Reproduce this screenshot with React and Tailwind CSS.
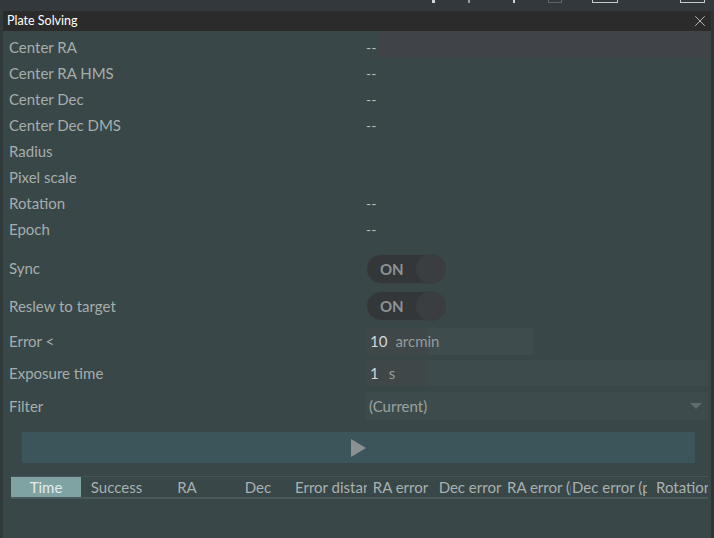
import { X } from "lucide-react";

const rows = [
  { label: "Center RA", value: "--", hot: true },
  { label: "Center RA HMS", value: "--" },
  { label: "Center Dec", value: "--" },
  { label: "Center Dec DMS", value: "--" },
  { label: "Radius", value: "" },
  { label: "Pixel scale", value: "" },
  { label: "Rotation", value: "--" },
  { label: "Epoch", value: "--" },
];

// widths measured off the grid header, clip = text wider than its column
const columns = [
  { name: "Time", w: "w-[70px]", active: true },
  { name: "Success", w: "w-[71px]" },
  { name: "RA", w: "w-[70px]" },
  { name: "Dec", w: "w-[72px]" },
  { name: "Error distance", w: "w-[73px]", clip: true },
  { name: "RA error", w: "w-[67px]" },
  { name: "Dec error", w: "w-[72px]" },
  { name: "RA error (pixels)", w: "w-[65px]", clip: true },
  { name: "Dec error (pixels)", w: "w-[76px]", clip: true },
  { name: "Rotation", w: "w-[61px]", clip: true, pad: true },
];

const Toggle = () => (
  <div className="relative w-[80px] h-[30px]">
    <div className="absolute inset-0 rounded-full bg-[#33373a] border border-[#3e4346]" />
    <div className="absolute right-0 top-0 w-[30px] h-[30px] rounded-full bg-[#3a3e41]" />
    <span className="absolute left-[14px] top-[5px] text-[15px] leading-[20px] font-bold text-[#8e9294]">ON</span>
  </div>
);

const Label = ({ children }) => (
  <div className="w-[357px] shrink-0 text-[15px] text-[#a6adad]">{children}</div>
);

export default function App() {
  return (
    <div
      className="w-[714px] h-[538px] flex flex-col bg-[#394748] overflow-hidden"
      style={{ fontFamily: "Lato, 'Noto Sans', sans-serif" }}
    >
      {/* app toolbar behind the window */}
      <div className="h-[11px] shrink-0 bg-[#32383b] relative">
        <div className="absolute left-[432px] top-0 w-[3px] h-[3px] bg-[#d0d4d5]" />
        <div className="absolute left-[468px] top-0 w-[2px] h-[3px] bg-[#9aa0a2]" />
        <div className="absolute left-[513px] top-0 w-[2px] h-[3px] bg-[#d0d4d5]" />
        <div className="absolute left-[548px] top-0 w-[14px] h-[3px] border-b border-x border-[#5f6567]" />
        <div className="absolute left-[592px] top-0 w-[26px] h-[3px] border-b border-x border-[#c6cacb]" />
        <div className="absolute left-[680px] top-0 w-[25px] h-[3px] border-b border-x border-[#c6cacb]" />
      </div>

      <div className="flex flex-1 min-h-0">
        <div className="w-[3px] shrink-0 bg-[#313a3b]" />

        <div className="flex-1 flex flex-col min-w-0">
          {/* title bar */}
          <div className="h-[20px] shrink-0 bg-[#2b2b2b] flex items-center justify-between pl-[4px] pr-[2px]">
            <span className="text-[12.5px] text-white">Plate Solving</span>
            <X size={18} strokeWidth={1} className="text-[#e2e2e2]" />
          </div>

          <div className="relative">
            <div className="absolute left-[375px] right-0 top-0 h-[27px] bg-[#404448]" />
            <div className="relative pt-[3px]">
              {rows.map((r) => (
                <div key={r.label} className="h-[26px] flex items-center pl-[6px]">
                  <Label>{r.label}</Label>
                  <span className="text-[14px] text-[#b6bbbc]">{r.value}</span>
                </div>
              ))}
            </div>
          </div>

          <div className="mt-[8px] h-[37px] flex items-center pl-[6px]">
            <Label>Sync</Label>
            <Toggle />
          </div>
          <div className="h-[38px] flex items-center pl-[6px]">
            <Label>Reslew to target</Label>
            <Toggle />
          </div>

          <div className="mt-[2px] h-[28px] flex items-center pl-[6px]">
            <Label>Error &lt;</Label>
            <div className="h-[27px] w-[168px] -ml-[1px] flex bg-[#3e4c4d]">
              <div className="w-[63px] h-full bg-[#3f4749] flex items-center pl-[5px] text-[15px]">
                <span className="text-[#d3d7d7]">10</span>
                <span className="ml-[8px] text-[#959c9d]">arcmin</span>
              </div>
            </div>
          </div>

          <div className="mt-[5px] h-[26px] flex items-center pl-[6px]">
            <Label>Exposure time</Label>
            <div className="h-[26px] w-[343px] -ml-[1px] flex bg-[#3d4b4c]">
              <div className="w-[63px] h-full bg-[#3f4749] flex items-center pl-[5px] text-[15px]">
                <span className="text-[#d3d7d7]">1</span>
                <span className="ml-[10px] text-[#959c9d]">s</span>
              </div>
            </div>
          </div>

          <div className="mt-[6px] h-[28px] flex items-center pl-[6px]">
            <Label>Filter</Label>
            <div className="h-[28px] w-[343px] -ml-[1px] bg-[#3e4b4c] flex items-center justify-between pl-[4px] pr-[6px]">
              <span className="text-[15px] text-[#9ba1a2]">(Current)</span>
              <svg width="12" height="6" viewBox="0 0 12 6">
                <path d="M0 0 L12 0 L6 6 Z" fill="#5e6a6e" />
              </svg>
            </div>
          </div>

          <div className="mt-[12px] ml-[19px] w-[673px] h-[31px] shrink-0 bg-[#3c555b] flex items-center justify-center">
            <svg width="15" height="18" viewBox="0 0 15 18">
              <path d="M0 0 L15 9 L0 18 Z" fill="#8b9091" />
            </svg>
          </div>

          {/* results grid header */}
          <div className="mt-[13px] ml-[8px] mr-[3px] border-t border-[#455455] border-b-2 border-b-[#4a5a5c] flex h-[23px]">
            {columns.map((c) => (
              <div
                key={c.name}
                className={`${c.w} shrink-0 h-[20px] overflow-hidden whitespace-nowrap flex items-center text-[15px] ${
                  c.clip ? "justify-start" : "justify-center"
                } ${c.pad ? "pl-[9px]" : c.clip ? "pl-[1px]" : ""} ${
                  c.active ? "bg-[#7fa3a3] text-[#e3ebeb]" : "text-[#a9b0b0]"
                }`}
              >
                {c.name}
              </div>
            ))}
          </div>
        </div>

        <div className="w-[3px] shrink-0 bg-[#2f3537]" />
      </div>
    </div>
  );
}
